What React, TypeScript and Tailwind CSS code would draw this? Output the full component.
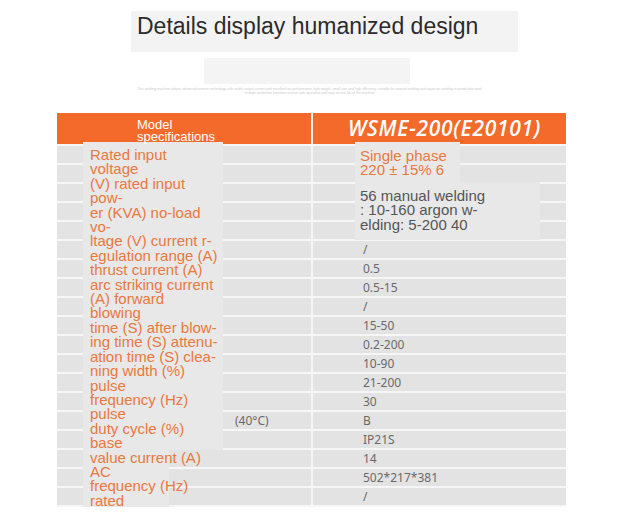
import React from "react";

const values: (string | null)[] = [
  null, null, null, null, null,
  "/", "0.5", "0.5-15", "/", "15-50", "0.2-200", "10-90", "21-200", "30", "B", "IP21S", "14", "502*217*381", "/",
];

const leftLines = [
  "Rated input",
  "voltage",
  "(V) rated input",
  "pow-",
  "er (KVA) no-load",
  "vo-",
  "ltage (V) current r-",
  "egulation range (A)",
  "thrust current (A)",
  "arc striking current",
  "(A) forward",
  "blowing",
  "time (S) after blow-",
  "ing time (S) attenu-",
  "ation time (S) clea-",
  "ning width (%)",
  "pulse",
  "frequency (Hz)",
  "pulse",
  "duty cycle (%)",
  "base",
  "value current (A)",
  "AC",
  "frequency (Hz)",
  "rated",
];

export default function App() {
  return (
    <div className="relative w-[619px] h-[532px] overflow-hidden bg-white font-['Liberation_Sans',Arial,sans-serif]">
      {/* Title block */}
      <div className="ml-[131px] mt-[11px] w-[387px] h-[41px] bg-[#f3f3f3] pt-[4px] pl-[6px]">
        <span className="block text-[23px] leading-none text-[#2b2b2b]">Details display humanized design</span>
      </div>
      <div className="ml-[204px] mt-[6px] w-[206px] h-[26px] bg-[#f4f4f4]" />
      <div className="h-[29px] pt-[3px] flex flex-col items-center text-[3.4px] leading-[4px] text-[#c9c9c9] whitespace-nowrap">
        <span>
          This welding machine adopts advanced inverter technology with stable output current and excellent arc performance, light weight, small size and high efficiency, suitable for manual welding and argon arc welding in production work
        </span>
        <span>
          multiple protection functions ensure safe operation and long service life of the machine
        </span>
      </div>

      {/* Table */}
      <div className="ml-[57px] w-[509px] flex flex-col">
        <div className="flex h-[33px] border-b-2 border-[#f6f6f6]">
          <div className="w-[254px] bg-[#f36a2b]" />
          <div className="w-[2px] bg-[#f6f6f6]" />
          <div className="flex-1 bg-[#f36a2b] flex items-center justify-center pl-[10px]">
            <span className="font-['Open_Sans',sans-serif] italic font-semibold text-[21px] text-white tracking-[0.7px] leading-none">
              WSME-200(E20101)
            </span>
          </div>
        </div>
        {values.map((v, i) => (
          <div key={i} className="flex h-[19px] border-b-2 border-[#f6f6f6]">
            <div className="w-[254px] bg-[#e3e3e3] relative">
              {i === 14 && (
                <span className="absolute left-[178px] top-[0px] font-['Noto_Sans',sans-serif] text-[12px] leading-[17px] text-[#6a6a6a]">
                  (40°C)
                </span>
              )}
            </div>
            <div className="w-[2px] bg-[#f6f6f6]" />
            <div className="flex-1 bg-[#e3e3e3] pl-[50px] font-['Noto_Sans',sans-serif] text-[12px] leading-[17px] text-[#6a6a6a]">
              {v}
            </div>
          </div>
        ))}
      </div>

      {/* Overlays: translated text blocks */}
      <div className="absolute left-[83px] top-[142px] w-[140px] h-[308px] bg-[#e8e8e8]" />
      <div className="absolute left-[83px] top-[450px] w-[86px] h-[57px] bg-[#e8e8e8]" />
      <div className="absolute left-[137px] top-[119px] text-[13px] leading-[12px] text-white">
        <div>Model</div>
        <div>specifications</div>
      </div>
      <div className="absolute left-[90px] top-[148px] text-[15px] leading-[14.4px] text-[#e8793f] whitespace-nowrap">
        {leftLines.map((l, i) => (
          <div key={i}>{l}</div>
        ))}
      </div>

      <div className="absolute left-[355px] top-[142px] w-[105px] h-[40px] bg-[#e8e8e8]" />
      <div className="absolute left-[360px] top-[149px] text-[15px] leading-[14.4px] text-[#e8793f] whitespace-nowrap">
        <div>Single phase</div>
        <div>220 ± 15% 6</div>
      </div>
      <div className="absolute left-[355px] top-[182px] w-[185px] h-[58px] bg-[#e8e8e8]" />
      <div className="absolute left-[360px] top-[189px] text-[15px] leading-[14.4px] text-[#555555] whitespace-nowrap">
        <div>56 manual welding</div>
        <div>: 10-160 argon w-</div>
        <div>elding: 5-200 40</div>
      </div>
    </div>
  );
}
